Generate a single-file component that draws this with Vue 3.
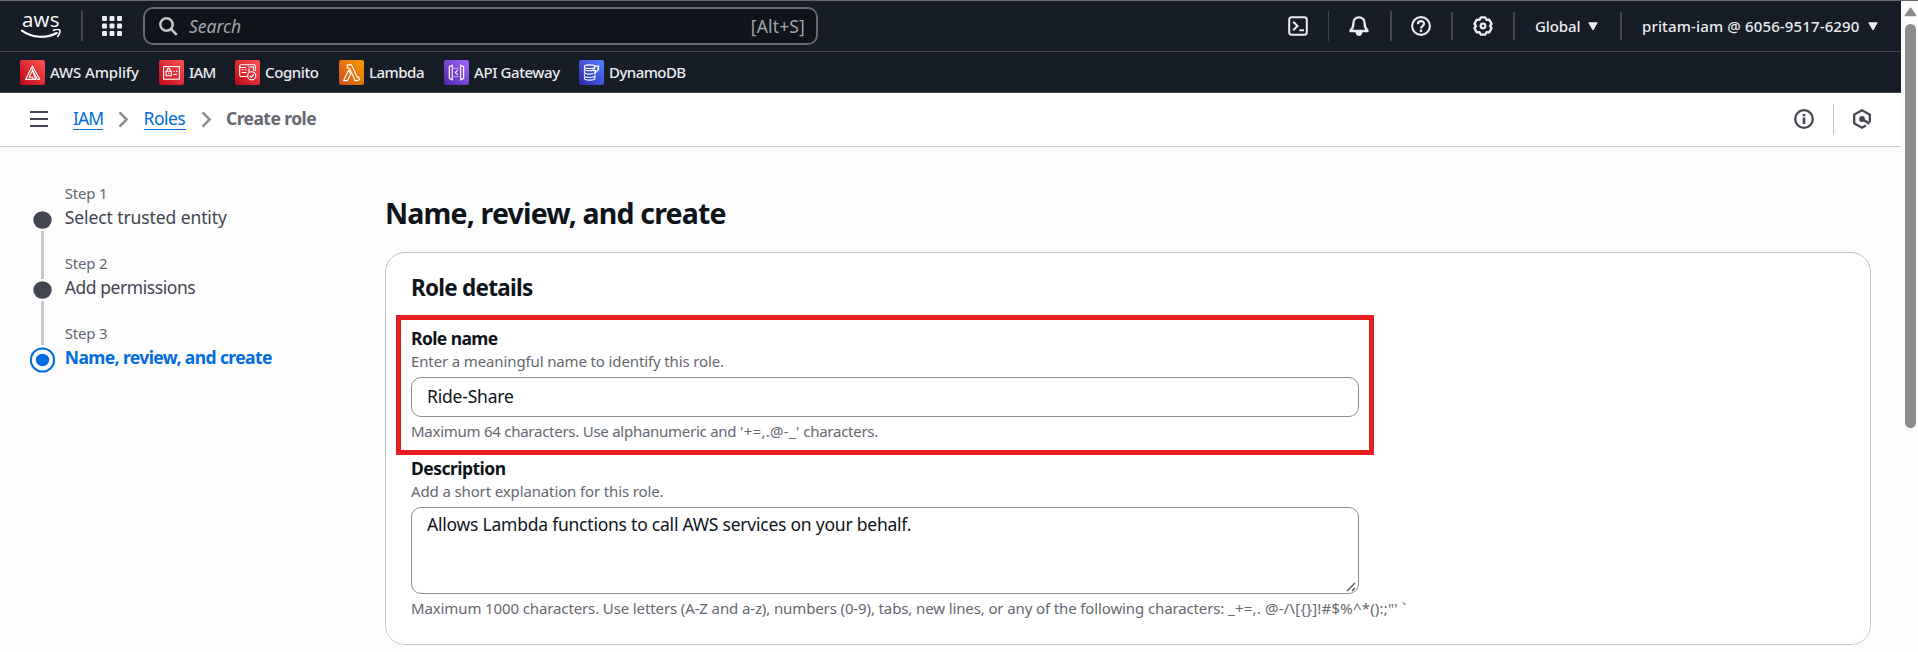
<script setup>
import { ref } from 'vue'

const roleName = ref('Ride-Share')
const description = ref('Allows Lambda functions to call AWS services on your behalf.')

const favorites = [
  { id: 'amplify', label: 'AWS Amplify' },
  { id: 'iam', label: 'IAM' },
  { id: 'cognito', label: 'Cognito' },
  { id: 'lambda', label: 'Lambda' },
  { id: 'gateway', label: 'API Gateway' },
  { id: 'dynamo', label: 'DynamoDB' },
]

const steps = [
  { id: 'trust', label: 'Step 1', title: 'Select trusted entity' },
  { id: 'perms', label: 'Step 2', title: 'Add permissions' },
  { id: 'review', label: 'Step 3', title: 'Name, review, and create' },
]
</script>

<template>
  <div class="window">
    <div class="top-edge"></div>
    <div class="frame">
      <div class="page">
        <header class="nav">
          <div class="logo">
            <span class="logo-text">aws</span>
            <svg class="smile" width="40" height="10" viewBox="0 0 40 10">
              <path d="M.8 1.6C12 9.4 25.500 9.400 35.800 4" fill="none" stroke="#fff" stroke-width="2" stroke-linecap="round" />
              <path d="M32.500 1.300c2.500-1 5.500-1 6.200-.1.600 1-.3 4.300-2 6.300" fill="none" stroke="#fff" stroke-width="1.600" stroke-linecap="round" stroke-linejoin="round" />
            </svg>
          </div>
          <i class="sep wide"></i>
          <svg class="waffle" width="20" height="20" viewBox="0 0 20 20" fill="#ebebf0">
            <template v-for="r in 3" :key="r">
              <rect v-for="c in 3" :key="c" :x="(c - 1) * 7.5" :y="(r - 1) * 7.5" width="5" height="5" rx="1" />
            </template>
          </svg>
          <div class="search">
            <svg width="19" height="19" viewBox="0 0 19 19" fill="none" stroke="#c6c6cd" stroke-width="2.500">
              <circle cx="7.500" cy="7.500" r="6.200" />
              <path d="M12 12l5.800 5.800" />
            </svg>
            <span class="search-text">Search</span>
            <span class="shortcut">[Alt+S]</span>
          </div>
          <div class="tools">
            <svg class="tool shell" width="20" height="20" viewBox="0 0 20 20" fill="none" stroke="#ebebf0" stroke-width="2">
              <rect x="1.200" y="1.200" width="17.600" height="17.600" rx="2.500" />
              <path d="M5.200 5.700l4.300 4.300-4.300 4.300M11.300 14.200h4.700" />
            </svg>
            <i class="sep thin"></i>
            <svg class="tool bell" width="20" height="20" viewBox="0 0 20 20">
              <path d="M10 1.400c-3.600 0-5.600 2.400-5.600 5.800 0 3.900-1 5.600-3 7.400v.4h17.200v-.4c-2-1.800-3-3.500-3-7.400 0-3.400-2-5.800-5.600-5.800z" fill="none" stroke="#ebebf0" stroke-width="2.300" stroke-linejoin="round" />
              <path d="M6.500 16h7c-.3 2.600-1.600 3.900-3.500 3.900s-3.200-1.300-3.500-3.900z" fill="#ebebf0" />
            </svg>
            <i class="sep"></i>
            <svg class="tool help" width="20" height="20" viewBox="0 0 20 20" fill="none" stroke="#ebebf0" stroke-width="2.100">
              <circle cx="10" cy="10" r="8.900" />
              <path d="M6.900 8.200c0-1.900 1.300-3.100 3.100-3.100s3.100 1.100 3.100 2.700c0 2.100-3.100 2.200-3.100 4.700" />
              <path d="M10 13.600v2.300" stroke-width="2.400" />
            </svg>
            <i class="sep short"></i>
            <svg class="tool gear" width="20" height="20" viewBox="0 0 20 20" fill="none" stroke="#ebebf0" stroke-width="2.300" stroke-linejoin="round">
              <path d="M7.900 1.300h4.200l1.400 2.600 2.700-.2 2.400 4.100L17 10l1.600 2.200-2.400 4.100-2.700-.2-1.400 2.600H7.900l-1.400-2.600-2.700.2-2.400-4.100L3 10 1.400 7.800l2.400-4.100 2.700.2z" />
              <circle cx="10" cy="10" r="2.300" stroke-width="2.300" />
            </svg>
            <i class="sep short"></i>
            <span class="menu global">Global</span>
            <svg class="caret" width="10" height="9" viewBox="0 0 10 9"><path d="M.8.8h8.400L5 8z" fill="#ebebf0" stroke="#ebebf0" stroke-linejoin="round" /></svg>
            <i class="sep short last"></i>
            <span class="menu account">pritam-iam @ 6056-9517-6290</span>
            <svg class="caret" width="10" height="9" viewBox="0 0 10 9"><path d="M.8.8h8.400L5 8z" fill="#ebebf0" stroke="#ebebf0" stroke-linejoin="round" /></svg>
          </div>
        </header>

        <nav class="favorites">
          <a v-for="f in favorites" :key="f.id" class="fav" :class="f.id">
            <svg width="25" height="25" viewBox="0 0 25 25" class="fav-icon" fill="none" stroke="#fff" stroke-width="1.100">
              <g v-if="f.id === 'amplify'" stroke-linejoin="round">
                <path d="M11.400 7.800L5.600 19.400h7.900l-1-2.100H9.100l3.300-6.700" />
                <path d="M12.400 10.600l3.400 8.800h-2.300M11.400 7.800l1.200-1.600 7.200 13.200h-2.300L11.400 7.800" />
              </g>
              <g v-else-if="f.id === 'iam'">
                <rect x="4.600" y="6.600" width="15.800" height="12.600" />
                <rect x="7.100" y="11.200" width="5.200" height="4.600" />
                <path d="M8.200 11V9.900a1.500 1.500 0 0 1 3 0V11M9.700 12.800v1.500M14.300 11.200h1.500M17 11.200h1.600M14.300 14.500h3.600" />
              </g>
              <g v-else-if="f.id === 'cognito'">
                <path d="M11.800 16.500H6.300c-1 0-1.600-.6-1.600-1.600V6.300c0-1 .6-1.600 1.600-1.600h12.400c1 0 1.600.6 1.600 1.600v5M4.700 7.500h6.500M6.700 9.800h1.800M9.700 9.800h1.800M6.700 12.500h4.800M14 12V8.200M18.500 10.500V7h-5" />
                <circle cx="16.700" cy="15.800" r="4.100" />
                <path d="M14.700 15.800l1.500 1.600 2.800-3.300" />
              </g>
              <path v-else-if="f.id === 'lambda'" stroke-linejoin="round" d="M8.300 4.900h4.300l5.500 12.400 1.500-.4 1 2.800-4.300 1.200-5.700-12.700H8.300zM9.700 10.200l2 3.900-3.200 6.500H4.600z" />
              <g v-else-if="f.id === 'gateway'">
                <path d="M8.300 5.200l-3 1.500v11.600l3 1.500zM16.700 5.200l3 1.500v11.600l-3 1.500zM5.500 9.300v6.400M19.500 9.300v6.400" />
                <path d="M9.500 8.300h6M9.500 16.700h6" stroke-dasharray="1 1" />
                <path d="M13.700 10l-2.300 2.500 2.300 2.500" />
              </g>
              <g v-else>
                <ellipse cx="10.700" cy="6.700" rx="5.300" ry="1.800" />
                <path d="M5.400 6.700v2.200c0 2 6.500 2.300 9 1M5.400 10.400v1.900c0 2 6 2.200 8.600 1.200M5.400 13.900v1.900c0 2.200 10.600 2.200 10.600 0v-1M5.400 17.300v1c0 2.400 10.600 2.400 10.600 0v-1.500" />
                <path d="M16 6l3.900.1-1.300 2.600h1.600l-4.700 5.200 1-3.300h-1.900z" stroke-linejoin="round" />
              </g>
            </svg>
            <span class="fav-label">{{ f.label }}</span>
          </a>
        </nav>

        <div class="crumbs">
          <svg class="burger" width="18" height="16" viewBox="0 0 18 16"><path d="M0 1h18M0 8h18M0 15h18" stroke="#424650" stroke-width="2.100" /></svg>
          <a class="crumb link-iam">IAM</a>
          <svg class="chevron" width="11" height="17" viewBox="0 0 11 17"><path d="M1.500 1.300l7.200 7.200-7.200 7.200" fill="none" stroke="#8c8c94" stroke-width="2.500" /></svg>
          <a class="crumb link-roles">Roles</a>
          <svg class="chevron" width="11" height="17" viewBox="0 0 11 17"><path d="M1.500 1.300l7.200 7.200-7.200 7.200" fill="none" stroke="#8c8c94" stroke-width="2.500" /></svg>
          <span class="crumb current">Create role</span>
          <div class="panel-tools">
            <svg width="20" height="20" viewBox="0 0 20 20" fill="none" stroke="#424650" stroke-width="2.300">
              <circle cx="10" cy="10" r="8.800" />
              <path d="M10 8.600V15M10 5v2.300" stroke-width="2.600" />
            </svg>
            <i class="panel-sep"></i>
            <svg width="18" height="20" viewBox="0 0 18 20">
              <path d="M16.800 13.300V5.600L9 1.300 1.200 5.600v8.800L9 18.700l4-2.200" fill="none" stroke="#424650" stroke-width="2.300" />
              <circle cx="9" cy="10" r="2.900" fill="#424650" />
              <path d="M9 10l7.500 4.600" stroke="#424650" stroke-width="2.500" />
            </svg>
          </div>
        </div>

        <div class="content">
          <aside class="wizard">
            <svg class="track" width="27" height="192" viewBox="0 0 27 192">
              <path d="M13.500 47v48M13.500 117v44" stroke="#c6c6cd" stroke-width="3" />
              <ellipse cx="13.500" cy="36" rx="9.200" ry="8.800" fill="#424650" />
              <ellipse cx="13.500" cy="106" rx="9.200" ry="8.800" fill="#424650" />
              <circle cx="13.500" cy="176" r="11.600" fill="#fff" stroke="#006ce0" stroke-width="2" />
              <ellipse cx="13.500" cy="176" rx="6.700" ry="6.200" fill="#006ce0" />
            </svg>
            <ol class="steps">
              <li v-for="s in steps" :key="s.id" class="step" :class="s.id">
                <span class="step-label">{{ s.label }}</span>
                <span class="step-title">{{ s.title }}</span>
              </li>
            </ol>
          </aside>

          <main class="main">
            <h1 class="title">Name, review, and create</h1>
            <section class="card">
              <h2 class="section">Role details</h2>
              <div class="field name-field">
                <label class="label role-label">Role name</label>
                <p class="hint role-hint">Enter a meaningful name to identify this role.</p>
                <div class="input">{{ roleName }}</div>
                <p class="note role-note">Maximum 64 characters. Use alphanumeric and <span class="symbols">'+=,.@-_'</span> characters.</p>
                <div class="highlight"></div>
              </div>
              <div class="field">
                <label class="label desc-label">Description</label>
                <p class="hint desc-hint">Add a short explanation for this role.</p>
                <div class="textarea">
                  <span>{{ description }}</span>
                  <svg class="grip" width="10" height="10" viewBox="0 0 10 10"><path d="M1 9l8-8M6 9l3-3" stroke="#555" stroke-width="1.400" /></svg>
                </div>
                <p class="note desc-note">Maximum 1000 characters. Use letters (A-Z and a-z), numbers (0-9), tabs, new lines, or any of the following characters: <span class="symbols">_+=,. @-/\[{}]!#$%^*():;"'<span class="tick">`</span></span></p>
              </div>
            </section>
          </main>
        </div>
      </div>

      <div class="scrollbar">
        <svg width="13" height="10" viewBox="0 0 13 10"><path d="M6.500 1.300l5 7.200h-10z" fill="#8b8b8b" stroke="#8b8b8b" stroke-width="1.600" stroke-linejoin="round" /></svg>
        <div class="thumb"></div>
      </div>
    </div>
  </div>
</template>

<style>
html, body { margin: 0; overflow: hidden; }
</style>

<style scoped>
.window {
  height: 652px;
  overflow: hidden;
  display: flex;
  flex-direction: column;
  background: #fcfcfd;
  color: #0f141a;
  font-family: "Noto Sans", "Open Sans", sans-serif;
  font-size: 17.5px;
  white-space: nowrap;
}
.window svg { display: block; flex: none; }
.top-edge { height: 1px; background: #656871; flex: none; }
.frame { flex: 1; display: flex; min-height: 0; }
.page { width: 1901px; flex: none; }

.nav {
  height: 50px;
  display: flex;
  align-items: center;
  background: #161d26;
  border-bottom: 1px solid #424650;
  color: #ebebf0;
}
.logo { width: 60px; height: 26px; margin-left: 21px; display: flex; flex-direction: column; }
.logo-text {
  height: 16px;
  margin-left: 1px;
  line-height: 12px;
  font-family: "Open Sans", "Noto Sans", sans-serif;
  font-size: 20.500px;
  font-weight: 500;
  letter-spacing: .2px;
  color: #fff;
}
.sep { width: 2px; height: 30px; background: #424650; flex: none; }
.sep.thin { width: 1px; }
.sep.short { height: 28px; }
.waffle { margin-left: 19px; }
.search {
  box-sizing: border-box;
  width: 675px;
  height: 38px;
  margin-left: 21px;
  padding: 0 11px 0 14px;
  display: flex;
  align-items: center;
  border: 2px solid #656871;
  border-radius: 10px;
  background: #0f141a;
  color: #a4a4ad;
}
.search-text { margin-left: 11px; font-style: italic; line-height: 34px; }
.shortcut { margin-left: auto; letter-spacing: .15px; }
.tools { display: flex; align-items: center; margin-left: 470px; }
.tools .thin { margin: 0 20px 0 20px; }
.tools .bell { margin-right: 21px; }
.help { margin-left: 19px; }
.tools .help + .sep { margin-left: 20px; }
.gear { margin-left: 20px; }
.tools .gear + .sep { margin-left: 20px; }
.menu { font-size: 15px; font-weight: 500; line-height: 20px; }
.global { width: 53px; margin-left: 20px; letter-spacing: -.1px; }
.account { width: 226px; margin-left: 20px; letter-spacing: .14px; }
.last { margin-left: 22px; }

.favorites {
  height: 40px;
  padding-left: 20px;
  display: flex;
  align-items: center;
  background: #161d26;
  border-bottom: 1px solid #424650;
  color: #ebebf0;
}
.fav { display: flex; align-items: center; gap: 5px; font-size: 15px; font-weight: 500; line-height: 20px; }
.fav-icon { border-radius: 2px; }
.fav.amplify { width: 139px; letter-spacing: -.12px; }
.fav.iam { width: 76px; letter-spacing: -.8px; }
.fav.cognito { width: 104px; letter-spacing: -.4px; }
.fav.lambda { width: 105px; letter-spacing: -.5px; }
.fav.gateway { width: 135px; letter-spacing: -.42px; }
.fav.dynamo { letter-spacing: -.55px; }
.amplify .fav-icon, .iam .fav-icon, .cognito .fav-icon { background: linear-gradient(45deg, #bd0816, #ff5252); }
.lambda .fav-icon { background: linear-gradient(45deg, #c8511b, #ff9900); }
.gateway .fav-icon { background: linear-gradient(45deg, #4d27aa, #a166ff); }
.dynamo .fav-icon { background: linear-gradient(45deg, #2e27ad, #527fff); }

.crumbs {
  box-sizing: border-box;
  height: 54px;
  padding: 0 0 1px 30px;
  display: flex;
  align-items: center;
  background: #fff;
  border-bottom: 1px solid #c6c6cd;
}
.crumb { line-height: 22px; margin-top: -2px; }
.link-iam, .link-roles { box-sizing: border-box; color: #006ce0; border-bottom: 1px solid #006ce0; line-height: 21px; margin-top: 0; }
.link-iam { width: 30px; margin-left: 25px; letter-spacing: -.9px; }
.link-roles { width: 42px; margin-left: 15px; letter-spacing: -.5px; text-indent: -.5px; }
.chevron { margin-left: 15px; }
.current { margin-left: 14px; font-weight: 700; color: #656871; letter-spacing: -.57px; }
.panel-tools { margin-left: auto; margin-right: 30px; display: flex; align-items: center; }
.panel-sep { width: 1px; height: 31px; margin: 0 19px; background: #c6c6cd; }

.content { display: flex; }
.wizard { width: 385px; display: flex; flex: none; padding-top: 37px; }
.track { margin-left: 29px; }
.steps { list-style: none; margin: -1px 0 0 8.800px; padding: 0; }
.step { height: 70px; display: flex; flex-direction: column; }
.step-label { height: 23px; line-height: 20px; font-size: 15px; color: #656871; letter-spacing: -.2px; }
.step-title { line-height: 23px; color: #424650; letter-spacing: -.1px; }
.perms .step-title { letter-spacing: -.44px; }
.review .step-title { font-weight: 700; color: #006ce0; letter-spacing: -.6px; }

.main { width: 1486px; }
.title { margin: 47px 0 20px; height: 38px; line-height: 38px; font-size: 28.500px; font-weight: 700; letter-spacing: -.83px; }
.card {
  position: relative;
  box-sizing: border-box;
  height: 393px;
  padding: 21px 25px 0;
  border: 1px solid #c6c6cd;
  border-radius: 20px;
  background: #fff;
}
.section { margin: 0; line-height: 28px; font-size: 22.500px; font-weight: 700; letter-spacing: -.75px; }
.field { position: relative; display: flex; flex-direction: column; }
.name-field { margin-top: 25px; }
.label { font-weight: 700; line-height: 22px; }
.role-label { letter-spacing: -.6px; }
.desc-label { letter-spacing: -.53px; }
.hint, .note { margin: 0; font-size: 15px; line-height: 20px; color: #656871; }
.hint { margin: 2px 0 6px; }
.note { margin-top: 4px; }
.role-hint { letter-spacing: -.13px; }
.desc-hint { letter-spacing: -.13px; }
.role-note { margin-bottom: 16px; letter-spacing: -.26px; }
.desc-note { letter-spacing: -.12px; }
.symbols { letter-spacing: .3px; }
.desc-note .symbols { letter-spacing: .2px; }
.tick { margin-left: 4px; }
.input, .textarea {
  box-sizing: border-box;
  width: 948px;
  padding: 0 15px;
  border: 1px solid #8c8c94;
  border-radius: 10px;
  background: #fff;
}
.input { height: 40px; line-height: 37px; letter-spacing: -.2px; }
.textarea { position: relative; height: 87px; padding-top: 5px; line-height: 23px; letter-spacing: -.23px; }
.grip { position: absolute; right: 2px; bottom: 1px; }
.highlight {
  position: absolute;
  left: -15.500px;
  top: -12px;
  box-sizing: border-box;
  width: 978px;
  height: 140px;
  border: 5px solid #e81e1e;
}

.scrollbar { flex: 1; padding: 6px 0 0 3px; background: #fcfcfc; }
.thumb { width: 11px; height: 404px; margin: 7px 0 0 1px; border-radius: 6px; background: #8b8b8b; }
</style>
